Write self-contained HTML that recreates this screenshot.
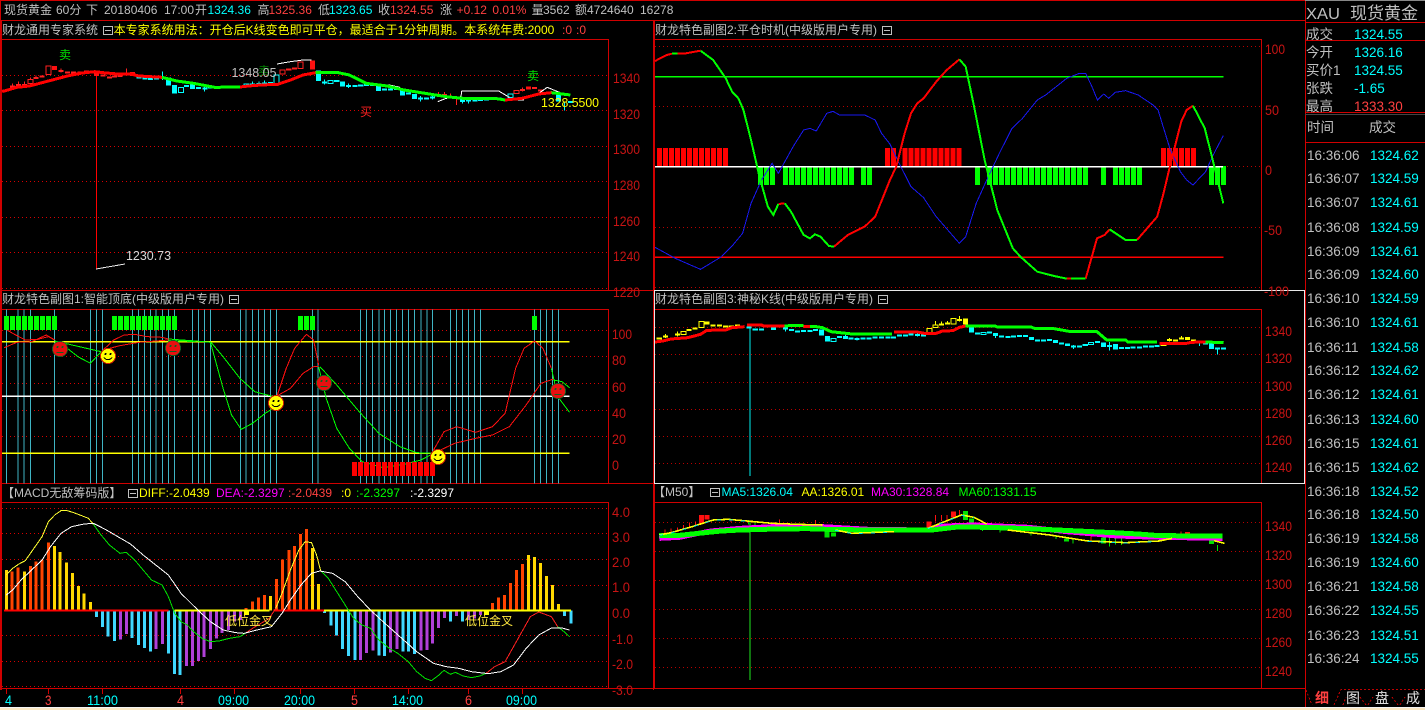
<!DOCTYPE html>
<html><head><meta charset="utf-8"><title>现货黄金</title>
<style>
html,body{margin:0;padding:0;background:#000;width:1425px;height:710px;overflow:hidden}
svg{display:block}
text{font-family:"Liberation Sans","Noto Sans CJK SC",sans-serif;font-size:12px;fill:#c0c0c0}
.z path{vector-effect:non-scaling-stroke;fill:none}
.a text{fill:#c81414;font-size:14px}
.g{stroke:#d80000;stroke-dasharray:1 3;stroke-width:1;fill:none}
.g2{stroke:#b80000;stroke-dasharray:1 3;stroke-width:1;fill:none}
.r{fill:#ff4040}.c{fill:#0ff}.y{fill:#ff0}.m{fill:#f0f}.n{fill:#0f0}.w{fill:#fff}
.s text{font-size:13.5px}
</style></head><body>
<svg width="1425" height="710" viewBox="0 0 1425 710" xmlns="http://www.w3.org/2000/svg" shape-rendering="crispEdges">
<rect width="1425" height="710" fill="#000"/>
<!-- grid -->
<path class="g" d="M2 75.5H608M2 110.5H608M2 146.5H608M2 181.5H608M2 217.5H608M2 252.5H608M2 288.5H608M2 330.5H608M2 356.5H608M2 383.5H608M2 410.5H608M2 436.5H608M2 508.5H608M2 533.5H608M2 559.5H608M2 585.5H608M2 635.5H608M2 661.5H608M2 686.5H608"/>
<path class="g2" d="M655 46.5H1261M655 106.5H1261M1223 166.5H1261M655 227.5H1261M655 287.5H1261M655 327.5H1261M655 354.5H1261M655 382.5H1261M655 409.5H1261M655 436.5H1261M655 463.5H1261M655 522.5H1261M655 551.5H1261M655 580.5H1261M655 609.5H1261M655 638.5H1261M655 667.5H1261"/>
<!-- frame -->
<g fill="none" stroke="#d00000" stroke-width="1">
<path d="M0 .5H1305M0 20.5H1305M.5 0V690M1.5 20V690M653.5 20V690M654.5 20V688M1305.5 0V707"/>
<path d="M1.5 39.5H608.5V290.5M1.5 290.5H653M1.5 309.5H608.5V483.5M1.5 483.5H653M1.5 502.5H608.5V688.5M1.5 688.5H1305"/>
<path d="M655 39.5H1261.5V290M655 502.5H1261.5V688M655 309.5H1261.5V483"/>
<path d="M1305 22.5H1425M1305 40.5H1425M1305 112.5H1425M1305 142.5H1425"/>
</g>
<path d="M1305 114.5H1425" stroke="#444" fill="none"/>
<path d="M1305 .5H1425" stroke="#888" fill="none"/>
<rect x="654.5" y="290.5" width="650" height="193" fill="none" stroke="#e8e8e8"/>

<!-- header -->
<text y="14"><tspan x="4">现货黄金</tspan><tspan x="56">60分</tspan><tspan x="86">下</tspan><tspan x="104">20180406</tspan><tspan x="164">17:00</tspan><tspan x="195">开</tspan><tspan x="207.5" class="c">1324.36</tspan><tspan x="257.5">高</tspan><tspan x="268.5" class="r">1325.36</tspan><tspan x="318">低</tspan><tspan x="329" class="c">1323.65</tspan><tspan x="378">收</tspan><tspan x="390" class="r">1324.55</tspan><tspan x="440">涨</tspan><tspan x="456.6" class="r">+0.12</tspan><tspan x="492.4" class="r">0.01%</tspan><tspan x="531.6">量</tspan><tspan x="543">3562</tspan><tspan x="575">额</tspan><tspan x="587">4724640</tspan><tspan x="640">16278</tspan></text>
<!-- titles -->
<text x="2" y="34">财龙通用专家系统</text>
<text x="113.6" y="34" class="y">本专家系统用法：开仓后K线变色即可平仓，最适合于1分钟周期。本系统年费:2000</text>
<text y="34"><tspan x="562" class="r">:0</tspan><tspan x="576" class="r">:0</tspan></text>
<text x="2" y="303">财龙特色副图1:智能顶底(中级版用户专用)</text>
<text x="2" y="497">【MACD无敌筹码版】</text>
<text y="497"><tspan x="139" class="y">DIFF:-2.0439</tspan><tspan x="216" class="m">DEA:-2.3297</tspan><tspan x="288" class="r">:-2.0439</tspan><tspan x="341" class="y">:0</tspan><tspan x="356" class="n">:-2.3297</tspan><tspan x="410" class="w">:-2.3297</tspan></text>
<text x="655" y="34">财龙特色副图2:平仓时机(中级版用户专用)</text>
<text x="655" y="303">财龙特色副图3:神秘K线(中级版用户专用)</text>
<text x="653" y="496">【M50】</text>
<text y="496"><tspan x="721.5" class="c">MA5:1326.04</tspan><tspan x="801.5" class="y">AA:1326.01</tspan><tspan x="871" class="m">MA30:1328.84</tspan><tspan x="958.5" class="n">MA60:1331.15</tspan></text>
<g fill="none" stroke="#c0c0c0"><path d="M103.5 26.5h9v8h-9zM105 30.5h6M229.5 295.5h9v8h-9zM231 299.5h6M128.5 489.5h9v8h-9zM130 493.5h6M882.5 26.5h9v8h-9zM884 30.5h6M878.5 295.5h9v8h-9zM880 299.5h6M710.5 488.5h9v8h-9zM712 492.5h6"/></g>

<!-- axis labels -->
<g class="a">
<text x="613" y="83" textLength="27" lengthAdjust="spacingAndGlyphs">1340</text>
<text x="613" y="119" textLength="27" lengthAdjust="spacingAndGlyphs">1320</text>
<text x="613" y="154" textLength="27" lengthAdjust="spacingAndGlyphs">1300</text>
<text x="613" y="190" textLength="27" lengthAdjust="spacingAndGlyphs">1280</text>
<text x="613" y="226" textLength="27" lengthAdjust="spacingAndGlyphs">1260</text>
<text x="613" y="261" textLength="27" lengthAdjust="spacingAndGlyphs">1240</text>
<text x="613" y="297" textLength="27" lengthAdjust="spacingAndGlyphs">1220</text>
<text x="612" y="339" textLength="20" lengthAdjust="spacingAndGlyphs">100</text>
<text x="612" y="365" textLength="14" lengthAdjust="spacingAndGlyphs">80</text>
<text x="612" y="392" textLength="14" lengthAdjust="spacingAndGlyphs">60</text>
<text x="612" y="418" textLength="14" lengthAdjust="spacingAndGlyphs">40</text>
<text x="612" y="444" textLength="14" lengthAdjust="spacingAndGlyphs">20</text>
<text x="612" y="470" textLength="7" lengthAdjust="spacingAndGlyphs">0</text>
<text x="612" y="517" textLength="18" lengthAdjust="spacingAndGlyphs">4.0</text>
<text x="612" y="542" textLength="18" lengthAdjust="spacingAndGlyphs">3.0</text>
<text x="612" y="567" textLength="18" lengthAdjust="spacingAndGlyphs">2.0</text>
<text x="612" y="592" textLength="18" lengthAdjust="spacingAndGlyphs">1.0</text>
<text x="612" y="618" textLength="18" lengthAdjust="spacingAndGlyphs">0.0</text>
<text x="612" y="644" textLength="21" lengthAdjust="spacingAndGlyphs">-1.0</text>
<text x="612" y="669" textLength="21" lengthAdjust="spacingAndGlyphs">-2.0</text>
<text x="612" y="695" textLength="21" lengthAdjust="spacingAndGlyphs">-3.0</text>
<text x="1265" y="54" textLength="20" lengthAdjust="spacingAndGlyphs">100</text>
<text x="1265" y="115" textLength="14" lengthAdjust="spacingAndGlyphs">50</text>
<text x="1265" y="175" textLength="7" lengthAdjust="spacingAndGlyphs">0</text>
<text x="1264" y="235" textLength="18" lengthAdjust="spacingAndGlyphs">-50</text>
<text x="1264" y="296" textLength="25" lengthAdjust="spacingAndGlyphs">-100</text>
<text x="1265" y="336" textLength="27" lengthAdjust="spacingAndGlyphs">1340</text>
<text x="1265" y="363" textLength="27" lengthAdjust="spacingAndGlyphs">1320</text>
<text x="1265" y="391" textLength="27" lengthAdjust="spacingAndGlyphs">1300</text>
<text x="1265" y="418" textLength="27" lengthAdjust="spacingAndGlyphs">1280</text>
<text x="1265" y="445" textLength="27" lengthAdjust="spacingAndGlyphs">1260</text>
<text x="1265" y="472" textLength="27" lengthAdjust="spacingAndGlyphs">1240</text>
<text x="1265" y="531" textLength="27" lengthAdjust="spacingAndGlyphs">1340</text>
<text x="1265" y="560" textLength="27" lengthAdjust="spacingAndGlyphs">1320</text>
<text x="1265" y="589" textLength="27" lengthAdjust="spacingAndGlyphs">1300</text>
<text x="1265" y="618" textLength="27" lengthAdjust="spacingAndGlyphs">1280</text>
<text x="1265" y="647" textLength="27" lengthAdjust="spacingAndGlyphs">1260</text>
<text x="1265" y="676" textLength="27" lengthAdjust="spacingAndGlyphs">1240</text>
</g>

<!-- PANEL 1 main -->
<path d="M96.5 72V269" fill="none" stroke="#ff0000" stroke-width="1"/>
<path d="M96 269L125 264" fill="none" stroke="#e8e8e8"/>
<g class="z" transform="translate(0,0) scale(.42092,.33333)">
<path stroke="#ff2020" stroke-width="2" d="M6 272h12M24 260h12M38 255h12M52 255h12M80 234h12M94 230h12M139 213h12M154 217h12M169 218h12M184 218h12M199 214h12M214 215h12M239 226h12M254 232h12M266 230h12M279 228h12M1036 285h12M1050 285h12M1064 292h12M1235 270h12M1264 264h12M1278 272h12"/>
<path stroke="#ff2020" d="M30 250v12M44 244v12M58 244v12M72 232v6M86 226v10M145 205v12M300 206v20M1042 276v14M1056 276v14M1070 280v16M1085 290v25M1241 262v12"/>
<path stroke="#ff1010" stroke-width="5" d="M129 198v12M229 214v14M315 216v12M743 182v26M1256 260v8"/>
<path stroke="#ff2020" stroke-width="1" d="M109 198h12v26h-12zM66 238h12v12h-12zM665 210h12v12h-12zM708 186h12v19h-12zM1221 271h12v10h-12z"/>
<path stroke="#ff2020" stroke-width="2" d="M680 208h12M694 206h12"/>
<path stroke="#0ff" stroke-width="2" d="M324 233h12M339 235h12M352 237h12M366 236h12M437 258h12M466 264h12M481 265h12M494 263h12M509 263h12M524 262h12M539 261h12M552 261h12M566 259h12M594 253h12M609 252h12M622 250h12M637 249h12M765 247h12M794 243h12M822 258h12M837 258h12M851 257h12M865 255h12M879 255h12M908 268h12M922 268h12M936 267h12M965 280h12M993 296h12M1007 295h12M1022 292h12M1107 302h12M1122 301h12M1136 300h12M1150 298h12M1164 295h12M1179 296h12M1350 306h12"/>
<path stroke="#0ff" d="M386 215v25M486 258v16M600 245v14M615 244v14M628 242v14M771 238v16M828 250v14M999 288v16M1028 284v14M1099 292v18M1113 294v16M1341 306v26"/>
<path stroke="#0ff" stroke-width="5" d="M400 232v24M415 255v25M457 253v14M757 212v31M814 245v15M899 258v15M956 272v14M985 282v15M1099 292v14M1327 285v20"/>
<path stroke="#0ff" stroke-width="1" d="M424 263h12v14h-12zM580 252h12v8h-12zM651 225h12v25h-12zM779 242h12v8h-12zM1207 282h12v10h-12z"/>
<path stroke="#fff" stroke-width="1" d="M325 228L380 232M658 192L690 185L720 180L740 180M900 258L925 255L950 262M1040 305L1060 295L1095 290L1097 273H1185L1210 292M1200 298L1245 300M1280 280L1300 262L1335 280"/>
<path stroke="#ff0000" stroke-width="3" d="M5 275L40 262L70 258L100 248L130 238L160 228L190 220L225 215L245 218L280 222L310 222L330 228L385 232M570 261L590 258L620 255L660 253L690 240L720 225L750 218M1200 300L1240 295L1280 282L1310 278"/>
<path stroke="#00ff00" stroke-width="3" d="M385 232L420 243L460 250L510 262L570 261M750 218L800 217L830 225L870 250L920 258L960 270L1010 280L1060 290L1100 295L1180 296L1200 300M1310 278L1355 285"/>
</g>
<text x="59" y="59" class="n" style="fill:#00e000">卖</text>
<text x="258" y="75" style="fill:#008000">卖</text>
<text x="527" y="80" style="fill:#00e000">卖</text>
<text x="360" y="116" style="fill:#ff2020">买</text>
<text x="231.5" y="77" font-size="13" style="font-size:13px" textLength="45" lengthAdjust="spacingAndGlyphs">1348.05</text>
<text x="126" y="260" style="font-size:13px;fill:#d8d8d8" textLength="45" lengthAdjust="spacingAndGlyphs">1230.73</text>
<text x="541" y="107" class="y" style="font-size:13px" textLength="58" lengthAdjust="spacingAndGlyphs">1328.5500</text>

<!-- PANEL 2 left -->
<g class="z" transform="translate(0,285) scale(.42092,.33333)">
<path stroke="#3fb4c4" stroke-width="1" d="M15 73V595M43 73V595M57 73V595M72 73V595M129 73V595M215 73V595M229 73V595M243 73V595M315 73V595M329 73V595M343 73V595M357 73V595M371 73V595M386 73V595M400 73V595M414 73V595M457 73V595M471 73V595M486 73V595M500 73V595M571 73V595M585 73V595M600 73V595M614 73V595M628 73V595M643 73V595M657 73V595M742 73V595M756 73V595M856 73V595M871 73V595M885 73V595M900 73V595M914 73V595M928 73V595M942 73V595M956 73V595M971 73V595M985 73V595M1000 73V595M1014 73V595M1028 73V595M1070 73V595M1085 73V595M1099 73V595M1113 73V595M1127 73V595M1141 73V595M1270 73V595M1284 73V595M1298 73V595M1313 73V595M1327 73V595"/>
<path stroke="#ffff00" stroke-width="1.6" d="M5 170H1353M5 505H1353"/>
<path stroke="#ffffff" stroke-width="1.6" d="M5 334H1353"/>
<path stroke="#ff1010" stroke-width="1" d="M10 188L40 172L75 170L110 150L130 165M10 130L30 145L60 165L90 163L115 155L130 165M245 195L285 182L330 172L400 165M245 195L270 165L295 150L320 148L350 155L385 157L400 162M655 345L680 250L700 190L728 148L745 165L757 240M655 335L690 310L720 265L745 245L757 245M1030 495L1055 440L1085 425L1130 442L1170 425L1200 385L1225 250L1245 190L1270 168L1290 190L1310 250M1030 505L1080 475L1130 460L1170 450L1210 425L1250 360L1285 295L1315 282"/>
<path stroke="#00ff00" stroke-width="1" d="M130 168L240 200M130 168L160 190L185 215L215 235L240 200M400 162L465 168L500 172M400 166L465 170M500 172L530 310L550 390L573 433L600 415L630 385L655 365M500 170L530 215L570 280L605 320L650 335M757 245L775 340L800 430L830 490L860 530L910 548L960 538L1000 525L1030 505M760 245L800 300L850 375L900 445L950 485L990 503L1030 505M1310 250L1325 335L1353 382M1315 285L1335 290L1353 308"/>
</g>
<g fill="none" stroke-dasharray="5 1">
<path stroke="#00ff00" stroke-width="14" d="M4 323H57M112 323H177M298 323H315M532 323H537"/>
<path stroke="#ff0000" stroke-width="14" d="M352 469H435"/>
</g>
<defs>
<g id="hap"><circle r="8" fill="#d02000"/><circle r="7" fill="#ffff00"/><circle cx="-2.5" cy="-2" r="1" fill="#000"/><circle cx="2.5" cy="-2" r="1" fill="#000"/><path d="M-4 1.5Q0 6 4 1.5" fill="none" stroke="#000"/></g>
<g id="sad"><circle r="8" fill="#106020"/><circle r="7.2" fill="#e81010"/><circle cx="-2.5" cy="-2" r="1" fill="#106020"/><circle cx="2.5" cy="-2" r="1" fill="#106020"/><path d="M-3.5 3.5H3.5" fill="none" stroke="#106020"/></g>
</defs>
<use href="#sad" x="60" y="349"/><use href="#hap" x="108" y="356"/><use href="#sad" x="173" y="348"/><use href="#hap" x="276" y="403"/><use href="#sad" x="324" y="383"/><use href="#hap" x="438" y="457"/><use href="#sad" x="558" y="391"/>

<!-- PANEL MACD -->
<g class="z" transform="translate(0,490) scale(.42092,.33333)">
<path stroke="#ffd800" stroke-width="3" d="M15 361V240M58 361V245M129 361V168M143 361V186M158 361V218M172 361V249M186 361V288M200 361V310M215 361V336M643 361V318M743 361V174M757 361V282M1256 361V195M1270 361V201M1284 361V219M1298 361V258M1313 361V285M1327 361V342"/>
<path stroke="#ff4400" stroke-width="3" d="M29 361V245M43 361V233M72 361V228M86 361V215M100 361V208M115 361V158M585 361V354M600 361V335M614 361V322M628 361V315M657 361V267M671 361V209M686 361V180M700 361V168M714 361V132M728 361V117M1156 361V358M1170 361V339M1184 361V323M1199 361V315M1213 361V279M1227 361V240M1241 361V222"/>
<path stroke="#40d8ff" stroke-width="3" d="M229 361V381M243 361V411M257 361V439M272 361V453M314 361V444M329 361V465M343 361V474M357 361V485M400 361V491M414 361V552M428 361V555M771 361V369M786 361V407M800 361V437M814 361V477M828 361V498M843 361V510M900 361V496M914 361V498M957 361V485M971 361V484M985 361V492M1070 361V395M1099 361V395M1341 361V378M1356 361V400"/>
<path stroke="#b040d8" stroke-width="3" d="M286 361V449M300 361V432M371 361V477M386 361V462M443 361V528M457 361V528M471 361V513M485 361V501M500 361V477M514 361V445M528 361V429M543 361V420M557 361V395M571 361V390M857 361V510M871 361V489M886 361V482M928 361V487M943 361V477M1000 361V482M1014 361V480M1028 361V460M1042 361V414M1056 361V384M1085 361V378M1113 361V390M1127 361V385M1141 361V375"/>
<path stroke="#ff0000" stroke-width="2" d="M10 361H400M650 361H770"/>
<path stroke="#ffff00" stroke-width="2" d="M415 361H640M770 361H1356"/>
<path stroke="#ffff00" stroke-width="5" d="M580 367h12M1150 367h12"/>
<path stroke="#ffff30" stroke-width="1" d="M15 255L30 235L45 222L60 212L75 185L100 140L115 95L130 75L145 62L160 62L175 68L190 75L210 85L222 103M655 355L670 310L690 240L710 180L725 155L740 158L752 195L762 243"/>
<path stroke="#00e000" stroke-width="1" d="M222 103L240 135L260 165L285 190L300 187L320 210L340 240L360 270L385 285L400 320L415 370L430 395L445 405L460 425L480 445L500 455L520 453L545 445L570 440L585 428M762 243L780 265L800 305L820 345L840 385L860 405L880 415L900 450L925 475L945 490L970 515L990 545L1010 565L1025 572L1040 558L1055 541L1070 553L1082 547L1100 558L1120 563L1140 558L1155 550M1325 410L1340 425L1353 440"/>
<path stroke="#ff2020" stroke-width="1" d="M585 428L600 415L620 400L640 385L655 355M1155 550L1175 530L1200 515L1220 470L1240 425L1260 380L1280 366L1310 380L1325 410"/>
<path stroke="#ffffff" stroke-width="1" d="M15 315L30 300L50 270L75 240L100 210L120 170L145 130L170 110L200 102L222 100L250 118L280 140L310 162L340 195L370 225L400 255L430 310L470 360L500 395L530 420L560 428L580 430L610 420L645 410L670 370L690 330L715 285L740 250L760 243L790 250L820 275L850 320L880 360L910 395L950 440L990 485L1030 520L1060 530L1090 535L1120 545L1160 551L1190 545L1220 525L1250 475L1280 435L1310 414L1335 414L1353 420"/>
</g>
<text x="225" y="625" class="y" style="fill:#ffe840">低位金叉</text>
<text x="465" y="625" class="y" style="fill:#ffe840">低位金叉</text>
<path d="M6.5 688v6M48.5 688v6M102.5 688v6M180.5 688v6M234.5 688v6M300.5 688v6M354.5 688v6M408.5 688v6M468.5 688v6M522.5 688v6" stroke="#d00000" fill="none"/>
<g>
<text x="5" y="705" class="c" style="font-size:14px" textLength="7" lengthAdjust="spacingAndGlyphs">4</text>
<text x="45" y="705" class="r" style="font-size:14px" textLength="6.5" lengthAdjust="spacingAndGlyphs">3</text>
<text x="87" y="705" class="c" style="font-size:14px" textLength="31" lengthAdjust="spacingAndGlyphs">11:00</text>
<text x="177" y="705" class="r" style="font-size:14px" textLength="7" lengthAdjust="spacingAndGlyphs">4</text>
<text x="218" y="705" class="c" style="font-size:14px" textLength="31" lengthAdjust="spacingAndGlyphs">09:00</text>
<text x="284" y="705" class="c" style="font-size:14px" textLength="31" lengthAdjust="spacingAndGlyphs">20:00</text>
<text x="351" y="705" class="r" style="font-size:14px" textLength="7" lengthAdjust="spacingAndGlyphs">5</text>
<text x="392" y="705" class="c" style="font-size:14px" textLength="31" lengthAdjust="spacingAndGlyphs">14:00</text>
<text x="465" y="705" class="r" style="font-size:14px" textLength="7" lengthAdjust="spacingAndGlyphs">6</text>
<text x="506" y="705" class="c" style="font-size:14px" textLength="31" lengthAdjust="spacingAndGlyphs">09:00</text>
</g>

<!-- RIGHT PANEL 1 -->
<g class="z" transform="translate(650,20) scale(.42092,.33333)">
<path stroke="#00ff00" stroke-width="1.4" d="M12 170H1362"/>
<path stroke="#ff0000" stroke-width="1.4" d="M12 712H1362"/>
</g>
<g fill="none" stroke-dasharray="5 1" stroke-width="18">
<path stroke="#ff0000" d="M657 157H728M885 157H896M902.5 157H962M1161 157H1196"/>
<path stroke="#00ff00" stroke-width="19" d="M758 175.5H776M783 175.5H854M861 175.5H872M975 175.5H980.5M987 175.5H1088M1101 175.5H1106M1113 175.5H1142M1209 175.5H1226"/>
</g>
<path d="M655 166.5H1223" stroke="#fff" stroke-width="1.5" fill="none"/>
<g class="z" transform="translate(650,20) scale(.42092,.33333)">
<path stroke="#1818f0" stroke-width="1" d="M12 682L60 715L120 748L170 710L195 678L220 640L240 550L265 480L290 430L305 460L340 380L365 330L380 325L395 333L420 280L435 274L450 285L480 285L510 285L535 300L550 340L570 372L590 425L620 500L650 533L680 590L735 670L750 650L775 550L800 480L830 400L860 325L885 295L920 240L940 225L990 175L1020 160L1035 160L1050 200L1063 240L1078 222L1090 235L1105 217L1130 212L1160 225L1195 255L1207 270L1235 385L1260 455L1275 480L1290 495L1320 455L1340 400L1362 347"/>
<path stroke="#ff0000" stroke-width="2" d="M12 123L40 105L52 101M65 101L85 100L120 92M305 552L320 550M437 680L470 645L510 620L535 590L570 480L585 440L605 340L620 280L635 250L650 235L680 185L705 150L735 118M990 776L1000 776M1035 776L1062 655L1080 645L1092 628M1157 660L1205 590L1220 520L1235 440L1262 305L1275 270L1290 257"/>
<path stroke="#00ff00" stroke-width="2" d="M52 101L65 101M120 92L150 120L180 175L195 215L210 235L222 270L240 360L260 470L280 560L293 585L305 552M320 550L335 575L365 645L380 655L392 643L405 650L425 678L437 680M735 118L750 140L770 260L795 420L825 570L862 685L880 710L920 755L960 768L990 776M1000 776L1035 776M1092 628L1130 660L1157 660M1290 257L1318 325L1335 410L1362 550"/>
</g>

<!-- RIGHT PANEL 3 -->
<g class="z" transform="translate(650,290) scale(.42092,.33333)">
<path stroke="#00f0f0" stroke-width="1" d="M237 110V558"/>
<path stroke="#ffff00" stroke-width="2" d="M16 145h12M31 140h12M59 133h12M87 120h12M101 116h12M144 106h12M159 107h12M174 110h12M188 110h12M202 106h12M686 103h12M701 101h12M729 90h12M1228 150h12M1242 151h12M1257 146h12M1271 145h12M1285 152h12"/>
<path stroke="#ffff00" stroke-width="1" d="M37 132v12M65 125v14M678 93v12M692 95v8M707 93v8M735 78v16M1234 144v10M1263 138v10"/>
<path stroke="#ffff00" stroke-width="5" d="M136 94v10M750 85v19M1277 141v9"/>
<path stroke="#ffff00" stroke-width="1" d="M74 124h12v10h-12zM116 94h12v19h-12zM658 115h12v18h-12zM672 105h12v8h-12zM715 85h12v17h-12zM1214 157h12v10h-12z"/>
<path stroke="#0ff" stroke-width="2" d="M229 113h12M244 118h12M259 119h12M287 116h12M301 110h12M316 113h12M330 120h12M344 124h12M359 123h12M374 123h12M387 120h12M444 141h12M472 145h12M486 147h12M500 146h12M514 146h12M529 142h12M544 142h12M559 142h12M573 142h12M587 137h12M601 136h12M614 134h12M629 135h12M644 136h12M772 131h12M801 127h12M829 140h12M844 141h12M858 140h12M872 138h12M886 138h12M915 151h12M929 151h12M943 150h12M972 160h12M986 163h12M1000 170h12M1014 169h12M1028 165h12M1057 156h12M1086 168h12M1114 174h12M1128 174h12M1142 172h12M1157 172h12M1171 170h12M1185 170h12M1199 168h12M1314 160h12M1342 176h12M1356 176h12"/>
<path stroke="#0ff" stroke-width="5" d="M407 118v19M422 138v17M464 138v9M322 108v10M293 113v7M764 106v22M821 129v9M906 141v9M963 150v9M992 160v8M1077 158v13M1106 162v16M1305 153v8M1334 160v17M878 135v6M892 135v6"/>
<path stroke="#0ff" stroke-width="1" d="M430 146h12v9h-12zM786 127h12v7h-12zM1042 157h12v7h-12zM1348 176v18M1092 156v26M1006 165v12M464 130v8M322 116v8M492 142v10M635 130v10M821 136v8M1305 160v8"/>
<path stroke="#ff0000" stroke-width="3" d="M12 156L30 153L50 147L90 143L120 133L135 121L180 120L195 113L225 110M230 105H265L270 108H320M365 110H380M580 126H635L655 131L680 130L695 123L720 122L735 112L750 108M1210 160H1275L1285 157L1320 156"/>
<path stroke="#00ff00" stroke-width="3" d="M320 108L330 107H365M380 110H395L410 113L430 125L480 132H575M750 108H820L825 111H905L915 116H960L1000 125H1062L1085 150H1130L1135 156H1205M1320 156L1363 158"/>
</g>

<!-- RIGHT PANEL 4 -->
<g class="z" transform="translate(650,480) scale(.42092,.33333)">
<path stroke="#20e820" stroke-width="1" d="M237 125V600"/>
<path stroke="#ff1010" stroke-width="1" d="M36 148v14M50 145v14M65 142v14M80 135v14M94 128v14M108 124v14M193 120v6M308 118v14M393 120v14M678 105v20M692 105v18M706 105v16M735 90v15M1048 168v16M1262 154v10"/>
<path stroke="#ff1010" stroke-width="5" d="M122 105v25M136 105v13M663 125v20M721 95v18M1277 156v6"/>
<path stroke="#00e000" stroke-width="5" d="M750 93v27M764 115v17M421 150v22M436 158v12M990 175v10M1077 172v18M1334 180v12"/>
<path stroke="#00e000" stroke-width="1" d="M1092 170v30M1106 172v22M1120 175v20M1348 195v18M905 155v12M964 165v12M1005 178v12M234 120v14M250 125v10M832 148v10M790 145v8M1305 172v8"/>
<path stroke="#ff00ff" stroke-width="5" d="M22 175L70 172L115 160L145 153L215 145L290 140L410 140L520 148L660 150L700 138L770 135L900 142L990 155L1110 168L1215 172L1360 175"/>
<path stroke="#00ff00" stroke-width="5" d="M22 167L70 166L115 160L170 153L215 150L300 147L375 146L420 148L520 150L670 150L730 141L800 142L900 146L1000 152L1100 158L1160 162L1210 167L1360 168"/>
<path stroke="#ffff00" stroke-width="1.6" d="M22 165L50 158L100 140L150 120L185 118L230 123L290 130L350 133L410 135M440 150L480 160L580 155M660 145L700 125L740 105L770 112L800 132M850 150L950 165L1040 183L1130 188L1210 183L1240 175M1340 182L1365 190"/>
<path stroke="#00e8e8" stroke-width="1" stroke-dasharray="4 8" d="M22 166L50 159L100 141L150 121L185 119L230 124M440 151L480 161L580 156M660 146L700 126L740 106L770 113M1040 184L1130 189L1210 184"/>
</g>

<!-- SIDE PANEL -->
<g class="s">
<text x="1306" y="19" style="font-size:16px" textLength="34" lengthAdjust="spacingAndGlyphs">XAU</text>
<text x="1350" y="19" style="font-size:17px">现货黄金</text>
<text x="1306" y="39">成交</text><text x="1354" y="39" class="c">1324.55</text>
<text x="1306" y="57">今开</text><text x="1354" y="57" class="c">1326.16</text>
<text x="1306" y="75">买价1</text><text x="1354" y="75" class="c">1324.55</text>
<text x="1306" y="93">张跌</text><text x="1354" y="93" class="c">-1.65</text>
<text x="1306" y="111">最高</text><text x="1354" y="111" class="r">1333.30</text>
<text x="1307" y="132">时间</text><text x="1369" y="132">成交</text>
<text x="1307" y="160">16:36:06</text><text x="1370" y="160" class="c">1324.62</text>
<text x="1307" y="183">16:36:07</text><text x="1370" y="183" class="c">1324.59</text>
<text x="1307" y="207">16:36:07</text><text x="1370" y="207" class="c">1324.61</text>
<text x="1307" y="232">16:36:08</text><text x="1370" y="232" class="c">1324.59</text>
<text x="1307" y="256">16:36:09</text><text x="1370" y="256" class="c">1324.61</text>
<text x="1307" y="279">16:36:09</text><text x="1370" y="279" class="c">1324.60</text>
<text x="1307" y="303">16:36:10</text><text x="1370" y="303" class="c">1324.59</text>
<text x="1307" y="327">16:36:10</text><text x="1370" y="327" class="c">1324.61</text>
<text x="1307" y="352">16:36:11</text><text x="1370" y="352" class="c">1324.58</text>
<text x="1307" y="375">16:36:12</text><text x="1370" y="375" class="c">1324.62</text>
<text x="1307" y="399">16:36:12</text><text x="1370" y="399" class="c">1324.61</text>
<text x="1307" y="424">16:36:13</text><text x="1370" y="424" class="c">1324.60</text>
<text x="1307" y="448">16:36:15</text><text x="1370" y="448" class="c">1324.61</text>
<text x="1307" y="472">16:36:15</text><text x="1370" y="472" class="c">1324.62</text>
<text x="1307" y="496">16:36:18</text><text x="1370" y="496" class="c">1324.52</text>
<text x="1307" y="519">16:36:18</text><text x="1370" y="519" class="c">1324.50</text>
<text x="1307" y="543">16:36:19</text><text x="1370" y="543" class="c">1324.58</text>
<text x="1307" y="567">16:36:19</text><text x="1370" y="567" class="c">1324.60</text>
<text x="1307" y="591">16:36:21</text><text x="1370" y="591" class="c">1324.58</text>
<text x="1307" y="615">16:36:22</text><text x="1370" y="615" class="c">1324.55</text>
<text x="1307" y="640">16:36:23</text><text x="1370" y="640" class="c">1324.51</text>
<text x="1307" y="663">16:36:24</text><text x="1370" y="663" class="c">1324.55</text>
</g>
<!-- tabs -->
<path d="M1306 690L1312 705M1334 705L1341 689.5H1425M1343 705L1346 697M1360 697L1366 705M1368 705L1373 697M1392 697L1398 705M1400 705L1405 697" stroke="#c00000" stroke-dasharray="2 2" fill="none"/>
<text x="1315" y="703" class="r" style="font-size:14px;font-weight:bold">细</text>
<text x="1346" y="703" style="font-size:14px;fill:#e0e0e0">图</text>
<text x="1375" y="703" style="font-size:14px;fill:#e0e0e0">盘</text>
<text x="1406" y="703" style="font-size:14px;fill:#e0e0e0">成</text>
<rect x="0" y="707" width="1425" height="1" fill="#f4f4f4"/>
<rect x="0" y="708" width="1425" height="2" fill="#fbe8c4"/>
</svg>
</body></html>
